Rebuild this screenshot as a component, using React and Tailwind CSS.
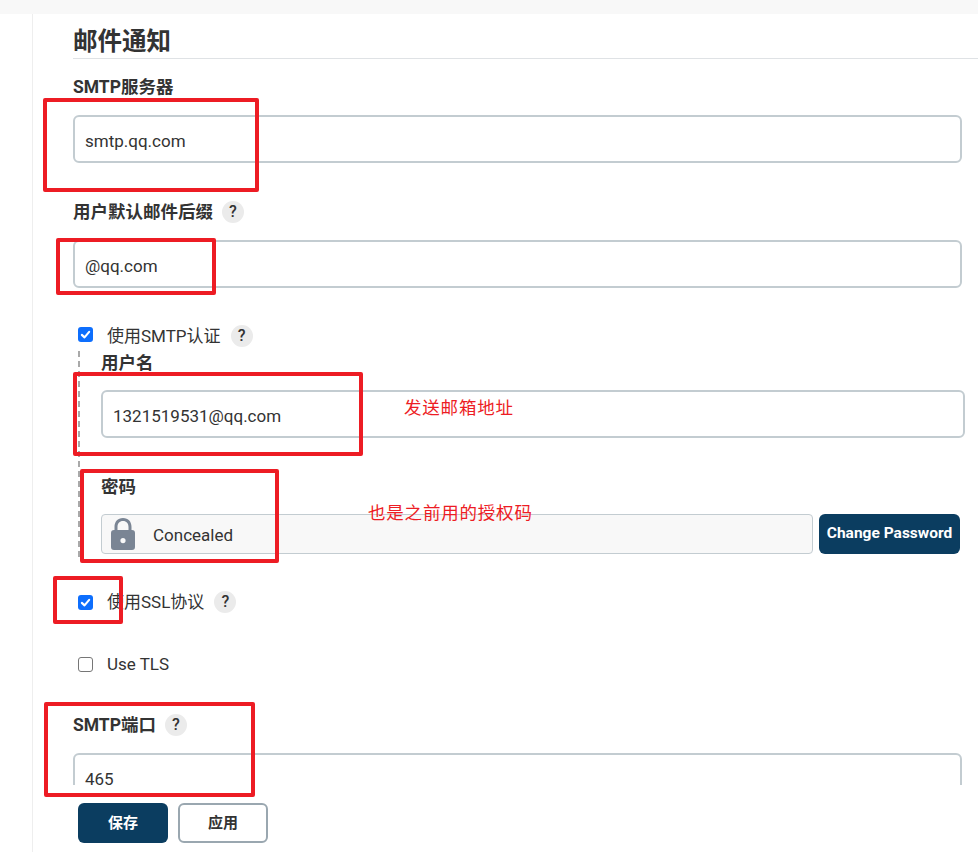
import React from 'react';

const font = { fontFamily: 'Roboto, "Noto Sans CJK SC", sans-serif' };
const noteFont = { fontFamily: '"Liberation Serif", "Noto Sans CJK SC", serif' };

function Help({ className = 'ml-[9px]' }) {
  return (
    <span className={`flex h-[22px] w-[22px] items-center justify-center rounded-full bg-[#ebebeb] text-[16px] font-medium leading-none text-[#333] ${className}`}>?</span>
  );
}

function Label({ children, help, className = '' }) {
  return (
    <div className={`flex h-[24px] items-center text-[17.5px] font-bold leading-[24px] text-[#333] ${className}`}>
      <span>{children}</span>
      {help && <Help />}
    </div>
  );
}

function TextBox({ value, className = '' }) {
  return (
    <div className={`flex h-[48px] shrink-0 items-center rounded-[6px] border-2 border-[#c3ccd1] bg-white pl-[10px] pt-[5px] text-[17px] text-[#333] ${className}`}>
      {value}
    </div>
  );
}

function Check({ checked, label, help, className = '', boxClass = '' }) {
  return (
    <div className={`flex h-[24px] items-center pl-[5px] text-[17px] text-[#333] ${className}`}>
      {checked ? (
        <span className={`flex h-[15px] w-[15px] items-center justify-center rounded-[3px] bg-[#0d6efd] ${boxClass}`}>
          <svg viewBox="0 0 16 16" className="h-[13px] w-[13px]" fill="none" stroke="white" strokeWidth="2.6" strokeLinecap="round" strokeLinejoin="round">
            <path d="M3.5 8.5 6.8 11.5 12.5 4.8" />
          </svg>
        </span>
      ) : (
        <span className="h-[15px] w-[15px] rounded-[3px] border border-[#767676] bg-white"></span>
      )}
      <span className="ml-[14px] pt-[2px]">{label}</span>
      {help && <Help className="ml-[10px]" />}
    </div>
  );
}

function Annotation({ className }) {
  return <div className={`pointer-events-none absolute rounded-[2px] border-[4px] border-[#ed1c24] ${className}`}></div>;
}

export default function App() {
  return (
    <div className="relative flex h-[852px] w-[978px] flex-col overflow-hidden bg-white" style={font}>
      <div className="h-[14px] shrink-0 bg-[#f8f8f8]"></div>

      <div className="ml-[32px] flex min-h-0 flex-1 flex-col border-l border-[#eeeeee]">
        <div className="min-h-0 flex-1 overflow-hidden pl-[40px]">
          <h1 className="mt-[9px] h-[36px] border-b border-[#dfe2e5] text-[24.5px] font-bold leading-[38px] text-[#333]">邮件通知</h1>

          <div className="pr-[16px]">
            <Label className="mt-[16px]">SMTP服务器</Label>
            <TextBox value="smtp.qq.com" className="mt-[16px]" />

            <Label help className="mt-[37px]">用户默认邮件后缀</Label>
            <TextBox value="@qq.com" className="mt-[16px]" />

            <Check checked help label="使用SMTP认证" className="mt-[36px]" boxClass="-mt-[3px]" />
          </div>

          <div className="ml-[5px] mt-[6px] h-[206px] border-l-2 border-dashed border-[#a9a9a9] pl-[21px] pr-[13px]">
            <Label className="-mt-[3px]">用户名</Label>
            <TextBox value="1321519531@qq.com" className="mt-[15px]" />

            <Label className="mt-[37px]">密码</Label>
            <div className="mr-[5px] mt-[15px] flex h-[40px] gap-[6px]">
              <div className="flex flex-1 items-center rounded-[4px] border border-[#c3ccd1] bg-[#f8f8f8] pl-[9px] text-[17px] text-[#333]">
                <svg viewBox="0 0 24 32" className="h-[32px] w-[24px]" fill="#7a8594">
                  <path d="M12 0C6.6 0 3.5 3.8 3.5 9v4H6.5V9c0-3.6 2-6 5.5-6s5.5 2.4 5.5 6v4h3V9C20.5 3.8 17.4 0 12 0Z" />
                  <path fillRule="evenodd" d="M3 12h18a3 3 0 0 1 3 3v14a3 3 0 0 1-3 3H3a3 3 0 0 1-3-3V15a3 3 0 0 1 3-3Zm9 8a2.6 2.6 0 1 0 0 5.2 2.6 2.6 0 0 0 0-5.2Z" />
                </svg>
                <span className="ml-[18px] pt-[3px]">Concealed</span>
              </div>
              <button className="w-[141px] rounded-[6px] bg-[#0b3d60] text-[15.5px] font-bold text-white">Change Password</button>
            </div>
          </div>

          <Check checked help label="使用SSL协议" className="mt-[33px]" />
          <Check label="Use TLS" className="mt-[38px]" />

          <div className="pr-[16px]">
            <Label help className="mt-[37px]">SMTP端口</Label>
            <TextBox value="465" className="mt-[16px]" />
          </div>
        </div>

        <div className="flex h-[67px] shrink-0 items-start gap-[10px] bg-white pl-[45px] pt-[18px]">
          <button className="h-[40px] w-[90px] rounded-[6px] bg-[#0b3d60] text-[15px] font-bold text-white">保存</button>
          <button className="h-[40px] w-[90px] rounded-[6px] border-2 border-[#9aa7b0] bg-white text-[15px] font-bold text-[#333]">应用</button>
        </div>
      </div>

      <Annotation className="left-[43px] top-[98px] h-[94px] w-[216px]" />
      <Annotation className="left-[56px] top-[238px] h-[57px] w-[160px]" />
      <Annotation className="left-[73px] top-[372px] h-[84px] w-[290px]" />
      <Annotation className="left-[80px] top-[469px] h-[94px] w-[199px]" />
      <Annotation className="left-[53px] top-[576px] h-[48px] w-[70px]" />
      <Annotation className="left-[44px] top-[702px] h-[95px] w-[211px]" />

      <div className="absolute left-[404px] top-[396px] text-[17.5px] leading-[24px] tracking-[0.8px] text-[#ed1c24]" style={noteFont}>发送邮箱地址</div>
      <div className="absolute left-[368px] top-[501px] text-[17.5px] leading-[24px] tracking-[0.8px] text-[#ed1c24]" style={noteFont}>也是之前用的授权码</div>
    </div>
  );
}
